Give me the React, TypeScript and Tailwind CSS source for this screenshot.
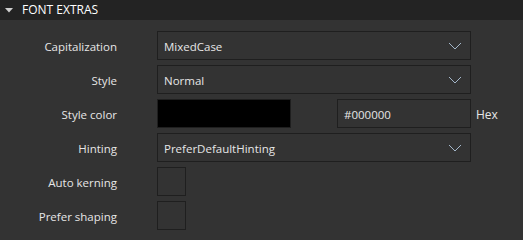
import React from "react";

const Chevron = () => (
  <svg width="14" height="8" viewBox="0 0 14 8" className="shrink-0">
    <path d="M1 1 L7 7 L13 1" fill="none" stroke="#a3b6c9" strokeWidth="1" />
  </svg>
);

const Select = ({ value }: { value: string }) => (
  <div className="flex h-[29px] w-[314px] items-center justify-between border border-[#1f1f1f] bg-[#333333] pl-[6px] pr-[8px]">
    <span className="pt-[2px]">{value}</span>
    <Chevron />
  </div>
);

const Label = ({ children }: { children: React.ReactNode }) => (
  <div className="flex h-[29px] items-center justify-end pt-[2px]">{children}</div>
);

export default function App() {
  return (
    <div
      className="h-[240px] w-[523px] overflow-hidden bg-[#333333] text-[11.5px] text-[#e6e6e6]"
      style={{ fontFamily: '"Open Sans", "Noto Sans", sans-serif' }}
    >
      <div className="flex h-[20px] items-center bg-[#232323] pl-[5px] text-[12px]">
        <svg width="8" height="5" viewBox="0 0 8 5" className="mr-[9px]">
          <path d="M0 0 L8 0 L4 4.5 Z" fill="#cfcfcf" />
        </svg>
        <span className="text-white">FONT EXTRAS</span>
      </div>
      <div className="grid grid-cols-[117px_auto] gap-x-[40px] gap-y-[5px] pt-[11px]">
        <Label>Capitalization</Label>
        <Select value="MixedCase" />
        <Label>Style</Label>
        <Select value="Normal" />
        <Label>Style color</Label>
        <div className="flex h-[29px] items-center">
          <div className="h-[29px] w-[134px] border border-[#1f1f1f] bg-black" />
          <div className="ml-[46px] flex h-[29px] w-[134px] items-center border border-[#1f1f1f] pl-[6px] pt-[2px]">
            #000000
          </div>
          <span className="ml-[5px] pt-[2px] text-[12px]">Hex</span>
        </div>
        <Label>Hinting</Label>
        <Select value="PreferDefaultHinting" />
        <Label>Auto kerning</Label>
        <div className="h-[29px] w-[29px] border border-[#1f1f1f]" />
        <Label>Prefer shaping</Label>
        <div className="h-[29px] w-[29px] border border-[#1f1f1f]" />
      </div>
    </div>
  );
}
